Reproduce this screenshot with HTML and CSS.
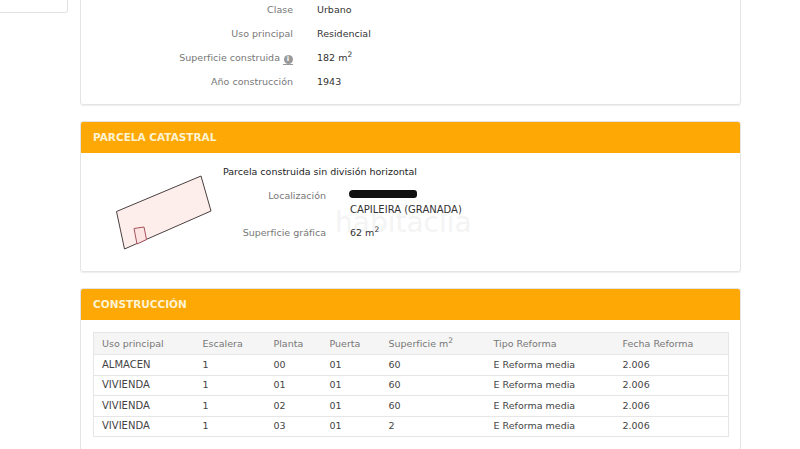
FILE: index.html
```html
<!DOCTYPE html>
<html lang="es">
<head>
    <meta charset="UTF-8">
    <meta name="viewport" content="width=device-width, initial-scale=1.0">
    <title>Ficha catastral</title>
    <link rel="stylesheet" href="styles.css">
</head>
<body>
    <div class="page">
        <div class="side">
            <div class="side-box"></div>
        </div>
        <div class="main">
            <div class="card card-top">
                <div class="row">
                    <div class="label">Clase</div>
                    <div class="value">Urbano</div>
                </div>
                <div class="row">
                    <div class="label">Uso principal</div>
                    <div class="value">Residencial</div>
                </div>
                <div class="row">
                    <div class="label">Superficie construida <span class="info-line"><span class="info">i</span></span></div>
                    <div class="value">182 m<sup>2</sup></div>
                </div>
                <div class="row">
                    <div class="label">Año construcción</div>
                    <div class="value">1943</div>
                </div>
            </div>

            <div class="card">
                <div class="card-head">PARCELA CATASTRAL</div>
                <div class="parcela">
                    <svg class="plano" width="115" height="85" viewBox="0 0 115 85">
                        <polygon points="11.5,41.5 96,6 106,41 19.5,79" fill="#fdeeec" stroke="#4a4040" stroke-width="1"/>
                        <polygon points="29,58.5 39,57 41.5,69.5 32,74" fill="#fce4e2" stroke="#a8525e" stroke-width="1"/>
                    </svg>
                    <div class="parcela-info">
                        <div class="parcela-title">Parcela construida sin división horizontal</div>
                        <div class="prow prow-loc">
                            <div class="plabel">Localización</div>
                            <div class="pvalue">
                                <div class="tachado"></div>
                                <div class="mayus">CAPILEIRA (GRANADA)</div>
                            </div>
                        </div>
                        <div class="prow">
                            <div class="plabel">Superficie gráfica</div>
                            <div class="pvalue">62 m<sup>2</sup></div>
                        </div>
                    </div>
                    <div class="marca">habitaclia</div>
                </div>
            </div>

            <div class="card">
                <div class="card-head">CONSTRUCCIÓN</div>
                <div class="tabla-wrap">
                    <table class="tabla">
                        <colgroup>
                            <col class="c1"><col class="c2"><col class="c3"><col class="c4"><col class="c5"><col class="c6"><col class="c7">
                        </colgroup>
                        <thead>
                            <tr>
                                <th>Uso principal</th>
                                <th>Escalera</th>
                                <th>Planta</th>
                                <th>Puerta</th>
                                <th>Superficie m<sup>2</sup></th>
                                <th>Tipo Reforma</th>
                                <th>Fecha Reforma</th>
                            </tr>
                        </thead>
                        <tbody>
                            <tr><td class="mayus">ALMACEN</td><td>1</td><td>00</td><td>01</td><td>60</td><td>E Reforma media</td><td>2.006</td></tr>
                            <tr><td class="mayus">VIVIENDA</td><td>1</td><td>01</td><td>01</td><td>60</td><td>E Reforma media</td><td>2.006</td></tr>
                            <tr><td class="mayus">VIVIENDA</td><td>1</td><td>02</td><td>01</td><td>60</td><td>E Reforma media</td><td>2.006</td></tr>
                            <tr><td class="mayus">VIVIENDA</td><td>1</td><td>03</td><td>01</td><td>2</td><td>E Reforma media</td><td>2.006</td></tr>
                        </tbody>
                    </table>
                </div>
            </div>
        </div>
    </div>
</body>
</html>
```

FILE: styles.css
```css
html {
    background: #fff;
}
html, body {
    margin: 0;
    height: 449px;
    overflow: hidden;
}
body {
    font-family: "DejaVu Sans", Verdana, sans-serif;
    font-size: 9.5px;
    color: #333;
}
sup {
    font-size: 7.5px;
    line-height: 0;
}
.mayus {
    font-size: 10px;
}

/* la pagina esta desplazada: lo de arriba queda cortado */
.page {
    display: flex;
    margin-top: -40px;
}
.side {
    width: 68px;
    margin-right: 12px;
    flex: none;
}
.side-box {
    height: 53px;
    border: 1px solid #e2e2e2;
    border-left: 0;
    border-radius: 0 0 3px 0;
    box-sizing: border-box;
}
.main {
    width: 661px;
    flex: none;
}

.card {
    border: 1px solid #e4e4e4;
    border-radius: 3px;
    margin-bottom: 16px;
    box-shadow: 0 1px 1px #eee;
    overflow: hidden;
}
.card-top {
    padding: 37px 0 10px;
}
.card-head {
    height: 32px;
    line-height: 33px;
    margin: -1px -1px 0;
    padding-left: 13px;
    background: #fea805;
    color: #fdf3d2;
    font-weight: bold;
    font-size: 10.5px;
}

.row {
    display: flex;
    height: 24px;
    line-height: 24px;
}
.label {
    width: 212px;
    text-align: right;
    color: #777;
}
.value {
    margin-left: 24px;
}
.info-line {
    display: inline-block;
    line-height: 10px;
    border-bottom: 1px solid #999;
}
.info {
    display: block;
    width: 9px;
    height: 9px;
    margin: 0 0.5px;
    line-height: 9px;
    border-radius: 50%;
    background: #999;
    color: #fff;
    font-size: 7px;
    font-weight: bold;
    text-align: center;
}

.parcela {
    display: flex;
    position: relative;
    height: 118px;
}
.plano {
    margin: 17px 0 0 24px;
    flex: none;
}
.parcela-info {
    margin-left: 3px;
    padding-top: 12px;
    width: 400px;
}
.parcela-title {
    height: 13px;
    line-height: 13px;
    color: #222;
}
.prow {
    display: flex;
    margin-top: 8px;
    line-height: 14px;
}
.prow-loc {
    margin-top: 11px;
    margin-bottom: 9px;
}
.plabel {
    width: 103px;
    text-align: right;
    color: #777;
}
.pvalue {
    margin-left: 24px;
}
.tachado {
    width: 68px;
    height: 8px;
    margin: 1px 0 5px -1px;
    background: #111;
    border-radius: 4px 3px 3px 4px;
}
.marca {
    position: absolute;
    z-index: -1;
    left: 254px;
    top: 53px;
    font-size: 28px;
    color: #f4f4f4;
}

.tabla-wrap {
    padding: 12px 12px 13px;
}
.tabla {
    width: 635px;
    table-layout: fixed;
    border-collapse: collapse;
    border: 1px solid #e6e6e6;
}
.c1 { width: 101px; }
.c2 { width: 71px; }
.c3 { width: 56px; }
.c4 { width: 59px; }
.c5 { width: 105px; }
.c6 { width: 129px; }
.c7 { width: 114px; }
.tabla th,
.tabla td {
    text-align: left;
    padding: 0 0 1px 8px;
    font-weight: normal;
    white-space: nowrap;
}
.tabla th {
    height: 21px;
    padding-bottom: 0;
    background: #f5f5f5;
    color: #777;
}
.tabla td {
    height: 18.5px;
    border-top: 1px solid #e6e6e6;
    color: #444;
}
```
